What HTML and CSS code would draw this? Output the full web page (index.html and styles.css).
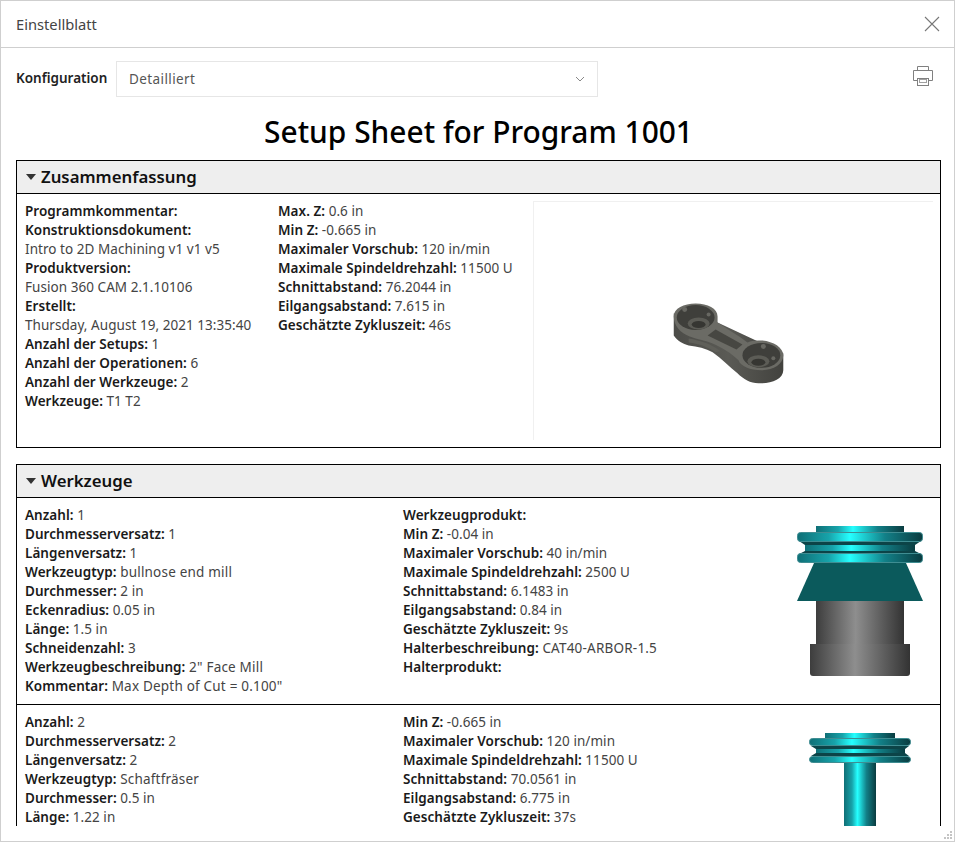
FILE: index.html
```html
<!DOCTYPE html>
<html lang="en">
<head>
    <meta charset="UTF-8">
    <meta name="viewport" content="width=device-width, initial-scale=1.0">
    <title>Einstellblatt</title>
    <link rel="stylesheet" href="styles.css">
</head>
<body>
    <div class="dialog">
        <div class="dialog-header">
            <span class="dialog-title">Einstellblatt</span>
            <svg class="close-icon" width="16" height="16" viewBox="0 0 16 16">
                <path d="M1 1 L15 15 M15 1 L1 15" fill="none" stroke="#777" stroke-width="1.1"/>
            </svg>
        </div>

        <div class="sheet">
            <div class="toolbar">
                <span class="config-label">Konfiguration</span>
                <div class="config-select">
                    <span>Detailliert</span>
                    <svg width="10" height="6" viewBox="0 0 10 6">
                        <path d="M1 1 L5 5 L9 1" fill="none" stroke="#888" stroke-width="1"/>
                    </svg>
                </div>
                <svg class="print-icon" width="22" height="22" viewBox="0 0 22 22">
                    <path d="M5.5 5.5 V1.5 H16.5 V5.5 M5.5 15.5 H1.5 V5.5 H20.5 V15.5 H16.5" fill="none" stroke="#808080"/>
                    <rect x="5.5" y="13.5" width="11" height="7" fill="none" stroke="#808080"/>
                    <rect x="7.5" y="14.5" width="7" height="3" fill="none" stroke="#a0a0a0"/>
                </svg>
            </div>

            <h1 class="sheet-title">Setup Sheet for Program 1001</h1>

            <div class="box">
                <div class="box-head"><span class="caret"></span>Zusammenfassung</div>
                <div class="summary">
                    <div class="col-summary">
                        <div class="line"><b>Programmkommentar:</b></div>
                        <div class="line"><b>Konstruktionsdokument:</b></div>
                        <div class="line">Intro to 2D Machining v1 v1 v5</div>
                        <div class="line"><b>Produktversion:</b></div>
                        <div class="line">Fusion 360 CAM 2.1.10106</div>
                        <div class="line"><b>Erstellt:</b></div>
                        <div class="line">Thursday, August 19, 2021 13:35:40</div>
                        <div class="line"><b>Anzahl der Setups:</b> 1</div>
                        <div class="line"><b>Anzahl der Operationen:</b> 6</div>
                        <div class="line"><b>Anzahl der Werkzeuge:</b> 2</div>
                        <div class="line"><b>Werkzeuge:</b> T1 T2</div>
                    </div>
                    <div class="col-stats">
                        <div class="line"><b>Max. Z:</b> 0.6 in</div>
                        <div class="line"><b>Min Z:</b> -0.665 in</div>
                        <div class="line"><b>Maximaler Vorschub:</b> 120 in/min</div>
                        <div class="line"><b>Maximale Spindeldrehzahl:</b> 11500 U</div>
                        <div class="line"><b>Schnittabstand:</b> 76.2044 in</div>
                        <div class="line"><b>Eilgangsabstand:</b> 7.615 in</div>
                        <div class="line"><b>Geschätzte Zykluszeit:</b> 46s</div>
                    </div>
                    <svg class="part-view" width="400" height="239" viewBox="533 201 400 239">
                        <defs>
                            <linearGradient id="partSide" x1="0" y1="0" x2="1" y2="0">
                                <stop offset="0" stop-color="#4c4c48"/>
                                <stop offset="0.5" stop-color="#5a5a55"/>
                                <stop offset="1" stop-color="#42423e"/>
                            </linearGradient>
                        </defs>
                        <path d="M673 313 L673 335 C677 341 682 343 688 345 C697 346 705 348 712 352 C721 358 729 367 737 373 C743 379 750 383 758 383 C770 384 783 379 783 370 L783 353 L717 322 Z" fill="url(#partSide)"/>
                        <path d="M673 316 C673 308 683 303 695 303 C707 303 717 308 717 316 L717 322 C727 329 738 335 747 342 C751 340 757 340 762 340 C773 341 783 347 783 355 C783 364 773 370 761 370 C750 370 740 366 738 360 C730 352 721 347 712 343 C705 340 697 339 689 336 C680 333 673 325 673 316 Z" fill="#6b6b65"/>
                        <path d="M715 329 L742 344 L736 349 L707 335 Z" fill="#474742"/>
                        <path d="M688 338 C700 340 712 344 720 351 L715 352 C707 346 697 343 688 342 Z" fill="#5f5f59"/>
                        <ellipse cx="695" cy="317" rx="19" ry="12.5" fill="#3f3f3b"/>
                        <ellipse cx="698" cy="323" rx="11" ry="6" fill="#5c5c56"/>
                        <ellipse cx="698" cy="324" rx="7" ry="3.5" fill="#363632"/>
                        <circle cx="684" cy="309" r="2.5" fill="#686862"/>
                        <circle cx="708" cy="314" r="2" fill="#686862"/>
                        <ellipse cx="761" cy="355" rx="19" ry="12.5" fill="#3f3f3b"/>
                        <ellipse cx="758" cy="361" rx="11" ry="6" fill="#5c5c56"/>
                        <ellipse cx="758" cy="362" rx="7" ry="3.5" fill="#363632"/>
                        <circle cx="763" cy="346" r="2.5" fill="#686862"/>
                        <circle cx="773" cy="358" r="2" fill="#686862"/>
                    </svg>
                </div>
            </div>

            <div class="box">
                <div class="box-head"><span class="caret"></span>Werkzeuge</div>
                <div class="tool-row">
                    <div class="col-tool">
                        <div class="line"><b>Anzahl:</b> 1</div>
                        <div class="line"><b>Durchmesserversatz:</b> 1</div>
                        <div class="line"><b>Längenversatz:</b> 1</div>
                        <div class="line wide"><b>Werkzeugtyp:</b> bullnose end mill</div>
                        <div class="line"><b>Durchmesser:</b> 2 in</div>
                        <div class="line"><b>Eckenradius:</b> 0.05 in</div>
                        <div class="line"><b>Länge:</b> 1.5 in</div>
                        <div class="line"><b>Schneidenzahl:</b> 3</div>
                        <div class="line wide"><b>Werkzeugbeschreibung:</b> 2" Face Mill</div>
                        <div class="line wide"><b>Kommentar:</b> Max Depth of Cut = 0.100"</div>
                    </div>
                    <div class="col-tool-stats">
                        <div class="line"><b>Werkzeugprodukt:</b></div>
                        <div class="line"><b>Min Z:</b> -0.04 in</div>
                        <div class="line"><b>Maximaler Vorschub:</b> 40 in/min</div>
                        <div class="line"><b>Maximale Spindeldrehzahl:</b> 2500 U</div>
                        <div class="line"><b>Schnittabstand:</b> 6.1483 in</div>
                        <div class="line"><b>Eilgangsabstand:</b> 0.84 in</div>
                        <div class="line"><b>Geschätzte Zykluszeit:</b> 9s</div>
                        <div class="line wide"><b>Halterbeschreibung:</b> CAT40-ARBOR-1.5</div>
                        <div class="line"><b>Halterprodukt:</b></div>
                    </div>
                    <svg class="tool-view" width="126" height="150" viewBox="797 526 126 150">
                        <defs>
                            <linearGradient id="teal" x1="0" y1="0" x2="1" y2="0">
                                <stop offset="0" stop-color="#0f6f76"/>
                                <stop offset="0.25" stop-color="#17a3aa"/>
                                <stop offset="0.42" stop-color="#25ffff"/>
                                <stop offset="0.7" stop-color="#128088"/>
                                <stop offset="1" stop-color="#0a3c40"/>
                            </linearGradient>
                            <linearGradient id="steel" x1="0" y1="0" x2="1" y2="0">
                                <stop offset="0" stop-color="#3d3d3d"/>
                                <stop offset="0.45" stop-color="#8e8e8e"/>
                                <stop offset="1" stop-color="#333333"/>
                            </linearGradient>
                        </defs>
                        <rect x="816" y="526" width="88" height="7" fill="url(#teal)"/>
                        <path d="M799 541 H921 L915 545 V551 L921 554 H799 L805 551 V545 Z" fill="#0c4448"/>
                        <rect x="805" y="545" width="110" height="6" fill="url(#teal)"/>
                        <rect x="797.5" y="532.5" width="125" height="9" rx="3" fill="url(#teal)" stroke="#3f8d92"/>
                        <rect x="797.5" y="553.5" width="125" height="9" rx="3" fill="url(#teal)" stroke="#3f8d92"/>
                        <path d="M814 563 H906 L923 601 H797 Z" fill="#0b5a5c"/>
                        <rect x="816" y="601" width="88" height="44" fill="url(#steel)"/>
                        <path d="M810 644 H910 V673 Q910 676 907 676 H813 Q810 676 810 673 Z" fill="url(#steel)"/>
                    </svg>
                </div>
                <div class="tool-row tool-row-next">
                    <div class="col-tool">
                        <div class="line"><b>Anzahl:</b> 2</div>
                        <div class="line"><b>Durchmesserversatz:</b> 2</div>
                        <div class="line"><b>Längenversatz:</b> 2</div>
                        <div class="line wide"><b>Werkzeugtyp:</b> Schaftfräser</div>
                        <div class="line"><b>Durchmesser:</b> 0.5 in</div>
                        <div class="line"><b>Länge:</b> 1.22 in</div>
                    </div>
                    <div class="col-tool-stats">
                        <div class="line"><b>Min Z:</b> -0.665 in</div>
                        <div class="line"><b>Maximaler Vorschub:</b> 120 in/min</div>
                        <div class="line"><b>Maximale Spindeldrehzahl:</b> 11500 U</div>
                        <div class="line"><b>Schnittabstand:</b> 70.0561 in</div>
                        <div class="line"><b>Eilgangsabstand:</b> 6.775 in</div>
                        <div class="line"><b>Geschätzte Zykluszeit:</b> 37s</div>
                    </div>
                    <svg class="tool-view" width="126" height="110" viewBox="797 733 126 110">
                        <rect x="825" y="733" width="70" height="6" fill="url(#teal)"/>
                        <path d="M811 746 H909 L905 749 V753 L909 756 H811 L816 753 V749 Z" fill="#0c4448"/>
                        <rect x="816" y="749" width="89" height="4" fill="url(#teal)"/>
                        <rect x="809.5" y="738.5" width="101" height="7" rx="3" fill="url(#teal)" stroke="#3f8d92"/>
                        <rect x="809.5" y="756.5" width="101" height="6" rx="3" fill="url(#teal)" stroke="#3f8d92"/>
                        <rect x="844" y="763" width="32" height="80" fill="url(#teal)"/>
                    </svg>
                </div>
            </div>
        </div>

        <div class="dialog-footer">
            <div class="grip">
                <i></i><i></i><i></i><i></i><i></i><i></i>
            </div>
        </div>
    </div>
</body>
</html>
```

FILE: styles.css
```css
* {
    margin: 0;
    padding: 0;
    box-sizing: border-box;
}

body {
    font-family: "Noto Sans", "Open Sans", sans-serif;
    background: #ffffff;
    color: #444444;
    overflow: hidden;
}

.dialog {
    width: 955px;
    height: 842px;
    border: 1px solid #cfcfcf;
    display: flex;
    flex-direction: column;
}

.dialog-header {
    height: 47px;
    flex: none;
    border-bottom: 1px solid #cfcfcf;
    display: flex;
    justify-content: space-between;
    align-items: center;
    padding: 0 14px 0 15px;
}

.dialog-title {
    font-size: 14.7px;
    color: #444444;
}

.sheet {
    flex: 1;
    overflow: hidden;
    padding: 13px 13px 0 15px;
}

.toolbar {
    display: flex;
    align-items: center;
    height: 36px;
}

.config-label {
    width: 100px;
    font-size: 13.5px;
    line-height: 17px;
    margin-top: -2px;
    font-weight: 600;
    color: #222222;
}

.config-select {
    width: 482px;
    height: 36px;
    border: 1px solid #e6e6e6;
    display: flex;
    justify-content: space-between;
    align-items: center;
    padding: 0 12px;
    font-size: 13.5px;
    letter-spacing: 0.4px;
    color: #555555;
}

.print-icon {
    margin-left: auto;
    margin-right: 7px;
    margin-top: -6px;
}

.sheet-title {
    text-align: center;
    font-size: 29.9px;
    font-weight: 500;
    line-height: 40px;
    color: #000000;
    height: 63px;
    padding-top: 15px;
}

.box {
    width: 925px;
    border: 1px solid #000000;
    margin-bottom: 16px;
}

.box-head {
    height: 33px;
    background: #eeeeee;
    border-bottom: 1px solid #000000;
    display: flex;
    align-items: center;
    padding-left: 9px;
    padding-bottom: 2px;
    font-size: 16.8px;
    font-weight: 600;
    color: #111111;
}

.caret {
    width: 0;
    height: 0;
    border-left: 5.5px solid transparent;
    border-right: 5.5px solid transparent;
    border-top: 6px solid #333333;
    margin-right: 5px;
    margin-top: 2px;
}

.line {
    font-size: 13.5px;
    line-height: 21px;
    height: 19px;
    white-space: nowrap;
    letter-spacing: 0.05px;
}

.line.wide {
    letter-spacing: 0.2px;
}

.line b {
    font-weight: 600;
    color: #1a1a1a;
    letter-spacing: 0.05px;
}

.summary {
    display: flex;
    padding: 7px 7px 7px 8px;
}

.col-summary {
    width: 253px;
}

.col-stats {
    width: 255px;
}

.part-view {
    border-top: 1px solid #f0f0f0;
    border-left: 1px solid #f0f0f0;
    flex: none;
}

.tool-row {
    display: flex;
    padding: 7px 17px 9px 8px;
}

.tool-row-next {
    border-top: 1px solid #000000;
}

.col-tool {
    width: 378px;
}

.col-tool-stats {
    flex: 1;
}

.tool-view {
    flex: none;
    margin-top: 21px;
}

.dialog-footer {
    height: 15px;
    flex: none;
    display: flex;
    justify-content: flex-end;
    align-items: flex-end;
    padding: 0 2px 2px 0;
}

.grip {
    display: grid;
    grid-template-columns: repeat(3, 2px);
    grid-template-rows: repeat(3, 2px);
    gap: 1px;
}

.grip i {
    background: #c4c4c4;
}

.grip i:nth-child(1) {
    grid-column: 3;
    grid-row: 1;
}

.grip i:nth-child(2) {
    grid-column: 2;
    grid-row: 2;
}

.grip i:nth-child(3) {
    grid-column: 3;
    grid-row: 2;
}

.grip i:nth-child(4) {
    grid-column: 1;
    grid-row: 3;
}

.grip i:nth-child(5) {
    grid-column: 2;
    grid-row: 3;
}

.grip i:nth-child(6) {
    grid-column: 3;
    grid-row: 3;
}
```
